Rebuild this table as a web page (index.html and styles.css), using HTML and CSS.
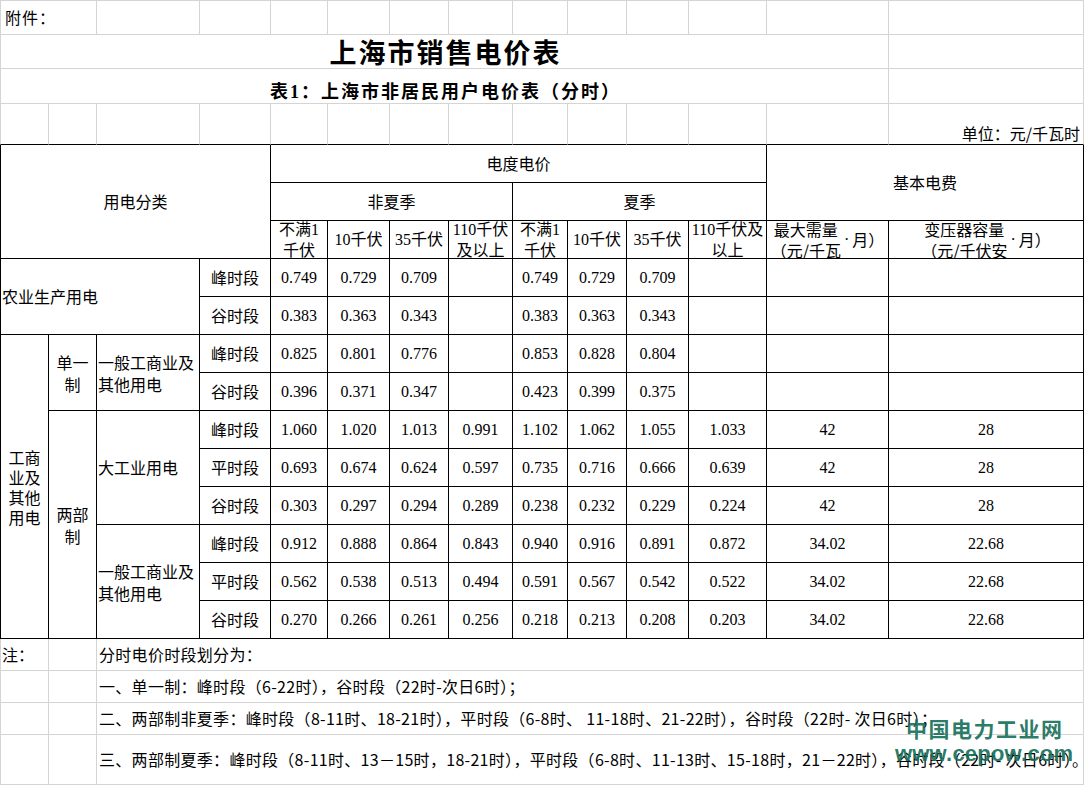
FILE: index.html
```html
<!DOCTYPE html>
<html lang="zh-CN">
<head>
<meta charset="utf-8">
<title>上海市销售电价表</title>
<link rel="stylesheet" href="styles.css">
</head>
<body>
<div class="sheet">
  <!-- row 1 -->
  <div class="c t l cs2 left att">附件：</div>
  <div class="c t"></div><div class="c t"></div><div class="c t"></div><div class="c t"></div>
  <div class="c t"></div><div class="c t"></div><div class="c t"></div><div class="c t"></div>
  <div class="c t"></div><div class="c t"></div><div class="c t"></div><div class="c t"></div>
  <!-- row 2 -->
  <div class="c l cs13 title">上海市销售电价表</div><div class="c"></div>
  <!-- row 3 -->
  <div class="c l cs13 sub">表1：上海市非居民用户电价表（分时）</div><div class="c"></div>
  <!-- row 4 -->
  <div class="c l kb"></div>
  <div class="c kb"></div><div class="c kb"></div><div class="c kb"></div><div class="c kb"></div>
  <div class="c kb"></div><div class="c kb"></div><div class="c kb"></div><div class="c kb"></div>
  <div class="c kb"></div><div class="c kb"></div><div class="c kb"></div><div class="c kb"></div>
  <div class="c kb unit">单位：元/千瓦时</div>

  <!-- header row 1 -->
  <div class="c k l cs4 rs3">用电分类</div>
  <div class="c k cs8">电度电价</div>
  <div class="c k cs2 rs2">基本电费</div>
  <!-- header row 2 -->
  <div class="c k cs4">非夏季</div>
  <div class="c k cs4">夏季</div>
  <!-- header row 3 -->
  <div class="c k n hd">不满1<br>千伏</div>
  <div class="c k n">10千伏</div>
  <div class="c k n">35千伏</div>
  <div class="c k n hd">110千伏<br>及以上</div>
  <div class="c k n hd">不满1<br>千伏</div>
  <div class="c k n">10千伏</div>
  <div class="c k n">35千伏</div>
  <div class="c k n hd">110千伏及<br>以上</div>
  <div class="c k hd">最大需量<br>（元/千瓦<span class="dot">·</span>月）</div>
  <div class="c k hd">变压器容量<br>（元/千伏安<span class="dot">·</span>月）</div>

  <!-- 农业生产用电 -->
  <div class="c k l cs3 rs2 left">农业生产用电</div>
  <div class="c k">峰时段</div>
  <div class="c k n">0.749</div><div class="c k n">0.729</div><div class="c k n">0.709</div><div class="c k n"></div>
  <div class="c k n">0.749</div><div class="c k n">0.729</div><div class="c k n">0.709</div><div class="c k n"></div>
  <div class="c k n"></div><div class="c k n"></div>

  <div class="c k">谷时段</div>
  <div class="c k n">0.383</div><div class="c k n">0.363</div><div class="c k n">0.343</div><div class="c k n"></div>
  <div class="c k n">0.383</div><div class="c k n">0.363</div><div class="c k n">0.343</div><div class="c k n"></div>
  <div class="c k n"></div><div class="c k n"></div>

  <!-- 工商业 单一制 -->
  <div class="c k l rs8 vert">工商<br>业及<br>其他<br>用电</div>
  <div class="c k rs2 two">单一<br>制</div>
  <div class="c k rs2 left two">一般工商业及<br>其他用电</div>
  <div class="c k">峰时段</div>
  <div class="c k n">0.825</div><div class="c k n">0.801</div><div class="c k n">0.776</div><div class="c k n"></div>
  <div class="c k n">0.853</div><div class="c k n">0.828</div><div class="c k n">0.804</div><div class="c k n"></div>
  <div class="c k n"></div><div class="c k n"></div>

  <div class="c k">谷时段</div>
  <div class="c k n">0.396</div><div class="c k n">0.371</div><div class="c k n">0.347</div><div class="c k n"></div>
  <div class="c k n">0.423</div><div class="c k n">0.399</div><div class="c k n">0.375</div><div class="c k n"></div>
  <div class="c k n"></div><div class="c k n"></div>

  <!-- 两部制 大工业用电 -->
  <div class="c k rs6 two">两部<br>制</div>
  <div class="c k rs3 left">大工业用电</div>
  <div class="c k">峰时段</div>
  <div class="c k n">1.060</div><div class="c k n">1.020</div><div class="c k n">1.013</div><div class="c k n">0.991</div>
  <div class="c k n">1.102</div><div class="c k n">1.062</div><div class="c k n">1.055</div><div class="c k n">1.033</div>
  <div class="c k n">42</div><div class="c k n">28</div>

  <div class="c k">平时段</div>
  <div class="c k n">0.693</div><div class="c k n">0.674</div><div class="c k n">0.624</div><div class="c k n">0.597</div>
  <div class="c k n">0.735</div><div class="c k n">0.716</div><div class="c k n">0.666</div><div class="c k n">0.639</div>
  <div class="c k n">42</div><div class="c k n">28</div>

  <div class="c k">谷时段</div>
  <div class="c k n">0.303</div><div class="c k n">0.297</div><div class="c k n">0.294</div><div class="c k n">0.289</div>
  <div class="c k n">0.238</div><div class="c k n">0.232</div><div class="c k n">0.229</div><div class="c k n">0.224</div>
  <div class="c k n">42</div><div class="c k n">28</div>

  <!-- 两部制 一般工商业 -->
  <div class="c k rs3 left two">一般工商业及<br>其他用电</div>
  <div class="c k">峰时段</div>
  <div class="c k n">0.912</div><div class="c k n">0.888</div><div class="c k n">0.864</div><div class="c k n">0.843</div>
  <div class="c k n">0.940</div><div class="c k n">0.916</div><div class="c k n">0.891</div><div class="c k n">0.872</div>
  <div class="c k n">34.02</div><div class="c k n">22.68</div>

  <div class="c k">平时段</div>
  <div class="c k n">0.562</div><div class="c k n">0.538</div><div class="c k n">0.513</div><div class="c k n">0.494</div>
  <div class="c k n">0.591</div><div class="c k n">0.567</div><div class="c k n">0.542</div><div class="c k n">0.522</div>
  <div class="c k n">34.02</div><div class="c k n">22.68</div>

  <div class="c k">谷时段</div>
  <div class="c k n">0.270</div><div class="c k n">0.266</div><div class="c k n">0.261</div><div class="c k n">0.256</div>
  <div class="c k n">0.218</div><div class="c k n">0.213</div><div class="c k n">0.208</div><div class="c k n">0.203</div>
  <div class="c k n">34.02</div><div class="c k n">22.68</div>

  <!-- notes -->
  <div class="c l left">注：</div><div class="c"></div>
  <div class="c cs12 note">分时电价时段划分为：</div>
  <div class="c l"></div><div class="c"></div>
  <div class="c cs12 note">一、单一制：峰时段（6-22时），谷时段（22时-次日6时）；</div>
  <div class="c l"></div><div class="c"></div>
  <div class="c cs12 note">二、两部制非夏季：峰时段（8-11时、18-21时），平时段（6-8时、 11-18时、21-22时），谷时段（22时- 次日6时）；</div>
  <div class="c l"></div><div class="c"></div>
  <div class="c cs12 note">三、两部制夏季：峰时段（8-11时、13－15时，18-21时），平时段（6-8时、11-13时、15-18时，21－22时），谷时段（22时- 次日6时）。</div>

  <div class="wm wm1">中国电力工业网</div>
  <div class="wm wm2">www.cepow.com</div>
</div>
</body>
</html>
```

FILE: styles.css
```css
html, body {
  margin: 0;
  padding: 0;
  background: #ffffff;
}

.sheet {
  position: relative;
  display: grid;
  width: 1084px;
  height: 785px;
  grid-template-columns: 49px 48px 103px 71px 57px 62px 59px 64px 55px 59px 62px 78px 122px 195px;
  grid-template-rows: 35px 34px 35px 41px 38px 38px 38px repeat(10, 38px) 32px 32px 32px 50px;
  color: #000;
  font-family: "Noto Sans CJK SC", sans-serif;
  font-size: 16px;
  line-height: 21px;
  overflow: hidden;
}

.c {
  box-sizing: border-box;
  border-right: 1px solid #d4d4d4;
  border-bottom: 1px solid #d4d4d4;
  display: flex;
  align-items: center;
  justify-content: center;
  text-align: center;
  white-space: nowrap;
  overflow: hidden;
  min-width: 0;
  min-height: 0;
}

.t { border-top: 1px solid #d4d4d4; }
.l { border-left: 1px solid #d4d4d4; }
.k { border-color: #000; }
.kb { border-bottom-color: #000; }

.cs2 { grid-column: span 2; }
.cs3 { grid-column: span 3; }
.cs4 { grid-column: span 4; }
.cs8 { grid-column: span 8; }
.cs12 { grid-column: span 12; }
.cs13 { grid-column: span 13; }
.rs2 { grid-row: span 2; }
.rs3 { grid-row: span 3; }
.rs6 { grid-row: span 6; }
.rs8 { grid-row: span 8; }

.left {
  justify-content: flex-start;
  text-align: left;
  padding-left: 1px;
}

.att {
  padding-left: 4px;
  letter-spacing: 1px;
}

.n {
  font-family: "Liberation Serif", "Noto Sans CJK SC", serif;
  font-size: 16px;
}

.hd { line-height: 21px; }

.dot {
  font-family: "Liberation Serif", serif;
  padding: 0 3px;
}

.two { line-height: 22px; }
.vert { line-height: 20px; }

.title {
  font-size: 27px;
  font-weight: 700;
  letter-spacing: 2px;
  padding-left: 2px;
  line-height: 32px;
}

.sub {
  font-family: "Liberation Serif", "Noto Sans CJK SC", serif;
  font-size: 18px;
  font-weight: 700;
  letter-spacing: 2px;
  align-items: flex-end;
  padding-left: 2px;
}

.unit {
  justify-content: flex-end;
  align-items: flex-end;
  padding-right: 3px;
}

.note {
  justify-content: flex-start;
  text-align: left;
  padding-left: 2px;
  letter-spacing: 0.3px;
}

.wm {
  position: absolute;
  white-space: nowrap;
  color: rgba(22, 112, 90, 0.93);
  font-weight: 700;
}

.wm1 {
  left: 906px;
  top: 716px;
  font-family: "Noto Sans CJK SC", sans-serif;
  font-size: 21px;
  line-height: 24px;
  letter-spacing: 1.5px;
}

.wm2 {
  left: 895px;
  top: 742px;
  font-family: "Liberation Sans", sans-serif;
  font-size: 22px;
  line-height: 24px;
  letter-spacing: 0.2px;
}
```
